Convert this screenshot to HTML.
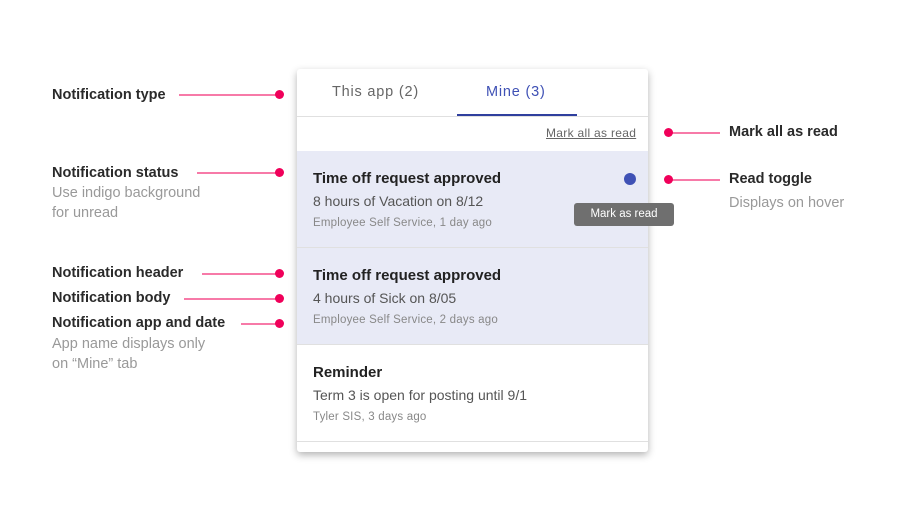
<!DOCTYPE html>
<html><head><style>
*{margin:0;padding:0;box-sizing:border-box}
body{width:922px;height:511px;background:#fff;font-family:"Liberation Sans",Roboto,sans-serif;position:relative;overflow:hidden;color:#222}
.a{position:absolute;white-space:nowrap}
.lbl{font-size:14.5px;font-weight:bold;color:#2a2a2a}
.sub{font-size:14.5px;color:#999;line-height:20px}
.ln{position:absolute;height:2px;background:#f77aa8}
.dot{position:absolute;width:9px;height:9px;border-radius:50%;background:#f0005a}
.panel{position:absolute;left:297px;top:69px;width:351px;height:383px;background:#fff;border-radius:3px;box-shadow:0 3px 8px rgba(0,0,0,.3);overflow:hidden}
.item{position:absolute;left:0;width:351px;height:97px;border-bottom:1px solid #e0e0e0}
.h{position:absolute;left:16px;top:19px;font-size:15px;font-weight:bold;color:#222}
.b{position:absolute;left:16px;top:42px;font-size:14px;color:#555}
.m{position:absolute;left:16px;top:66px;font-size:11.5px;color:#888;letter-spacing:.2px}
</style></head><body>
<div class="a lbl" style="left:52px;top:87px">Notification type</div>
<div class="ln" style="left:179px;top:94px;width:100px"></div><div class="dot" style="left:275px;top:90px"></div>

<div class="a lbl" style="left:52px;top:165px">Notification status</div>
<div class="a sub" style="left:52px;top:183px">Use indigo background<br>for unread</div>
<div class="ln" style="left:197px;top:172px;width:82px"></div><div class="dot" style="left:275px;top:168px"></div>

<div class="a lbl" style="left:52px;top:265px">Notification header</div>
<div class="ln" style="left:202px;top:273px;width:77px"></div><div class="dot" style="left:275px;top:269px"></div>
<div class="a lbl" style="left:52px;top:290px">Notification body</div>
<div class="ln" style="left:184px;top:298px;width:95px"></div><div class="dot" style="left:275px;top:294px"></div>
<div class="a lbl" style="left:52px;top:315px">Notification app and date</div>
<div class="ln" style="left:241px;top:323px;width:38px"></div><div class="dot" style="left:275px;top:319px"></div>
<div class="a sub" style="left:52px;top:334px">App name displays only<br>on “Mine” tab</div>

<div class="ln" style="left:668px;top:132px;width:52px"></div><div class="dot" style="left:664px;top:128px"></div>
<div class="a lbl" style="left:729px;top:124px">Mark all as read</div>
<div class="ln" style="left:668px;top:179px;width:52px"></div><div class="dot" style="left:664px;top:175px"></div>
<div class="a lbl" style="left:729px;top:171px">Read toggle</div>
<div class="a sub" style="left:729px;top:193px">Displays on hover</div>

<div class="panel">
  <div class="a" style="left:35px;top:15px;font-size:14.5px;color:#666;letter-spacing:.8px">This app (2)</div>
  <div class="a" style="left:189px;top:15px;font-size:14.5px;color:#3f51b5;letter-spacing:.8px">Mine (3)</div>
  <div class="a" style="left:160px;top:45px;width:120px;height:2px;background:#2f3f9e"></div>
  <div class="a" style="left:0;top:47px;width:351px;height:1px;background:#e0e0e0"></div>
  <div class="a" style="left:249px;top:57px;font-size:12px;color:#666;text-decoration:underline;letter-spacing:.3px">Mark all as read</div>
  <div class="item" style="top:82px;background:#e8eaf6">
    <div class="h">Time off request approved</div><div class="b">8 hours of Vacation on 8/12</div><div class="m">Employee Self Service, 1 day ago</div>
    <div class="a" style="left:327px;top:22px;width:12px;height:12px;border-radius:50%;background:#3f51b5"></div>
  </div>
  <div class="item" style="top:179px;background:#e8eaf6">
    <div class="h">Time off request approved</div><div class="b">4 hours of Sick on 8/05</div><div class="m">Employee Self Service, 2 days ago</div>
  </div>
  <div class="item" style="top:276px">
    <div class="h">Reminder</div><div class="b">Term 3 is open for posting until 9/1</div><div class="m">Tyler SIS, 3 days ago</div>
  </div>
</div>
<div class="a" style="left:574px;top:203px;width:100px;height:23px;background:#6f6f6f;border-radius:3px;color:#fff;font-size:11.5px;text-align:center;line-height:23px">Mark as read</div>
</body></html>
